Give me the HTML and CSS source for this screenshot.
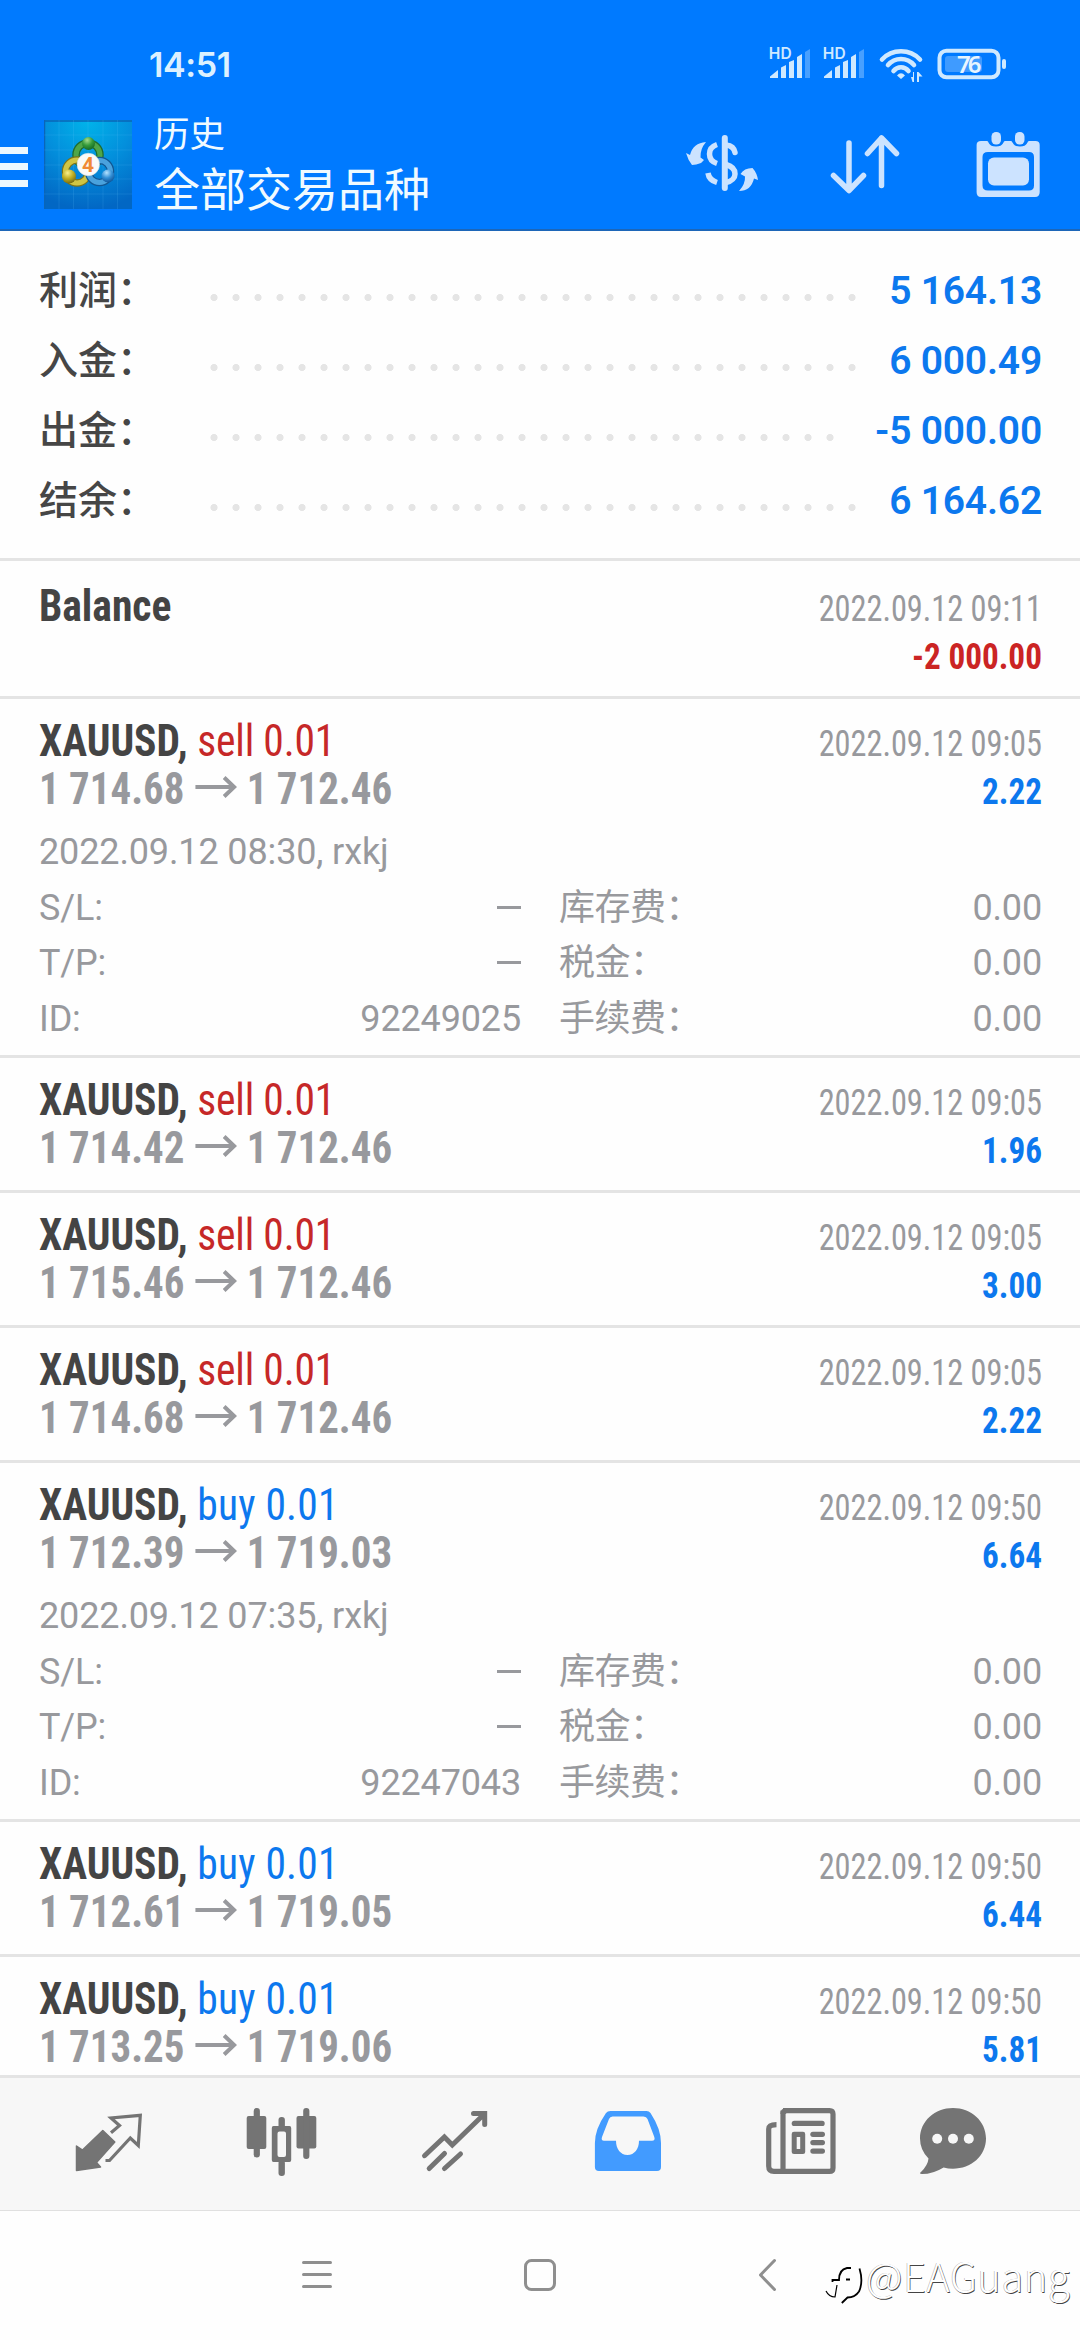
FILE: index.html
```html
<!DOCTYPE html>
<html lang="zh-CN">
<head>
<meta charset="utf-8">
<title>历史</title>
<link rel="stylesheet" href="styles.css">
</head>
<body>
<div class="screen">
  <header class="header">
    <div class="status">
      <span class="clock">14:51</span>
      <svg class="status-icons" width="240" height="40" viewBox="768 45 240 40" fill="#cfe9ff">
        <g id="signal">
          <text class="hd" x="768.8" y="59.2" textLength="23">HD</text>
          <path d="M770 78V76.500L778 70V78zM781 78V67.500L786 65V78zM789 78V62L794 60V78zM797 78V57L802 54V78z"/>
          <path d="M805 78V52L810 49V78z" opacity=".35"/>
        </g>
        <use href="#signal" x="54"/>
        <g fill="none" stroke="#cfe9ff" stroke-width="4.600" stroke-linecap="round">
          <path d="M882 59.500C892 48.500 910 48.500 920 59.500"/>
          <path d="M888 65C895 57 907 57 914 65"/>
          <path d="M893.500 71C897.500 66 904.500 66 908.500 71"/>
        </g>
        <path d="M901 79L897 75.500Q901 71 905 75.500zM914 72V82H912.500L911 77H913V72zM917 82V72H918.500L922.500 76.500H919V82z"/>
        <rect x="939.500" y="50.700" width="59" height="26.600" rx="7" fill="none" stroke="#cfe9ff" stroke-width="4"/>
        <rect x="945" y="56" width="37" height="16" rx="3" opacity=".3"/>
        <rect x="1002" y="59" width="4" height="10" rx="2"/>
        <text class="battery" x="957" y="73" textLength="24.500">76</text>
      </svg>
    </div>
    <div class="appbar">
      <div class="menu"><i></i><i></i><i></i></div>
      <svg class="logo" width="88" height="89" viewBox="0 0 88 89">
        <defs>
          <radialGradient id="bg" cx=".5" cy="0" r="1"><stop offset="0" stop-color="#00b4ea"/><stop offset=".5" stop-color="#038fdc"/><stop offset="1" stop-color="#0267c4"/></radialGradient>
          <radialGradient id="gr" cx=".4" cy=".25" r=".8"><stop offset="0" stop-color="#a5dc8c"/><stop offset=".5" stop-color="#369b3b"/><stop offset="1" stop-color="#126323"/></radialGradient>
          <radialGradient id="ye" cx=".4" cy=".25" r=".8"><stop offset="0" stop-color="#f8f08a"/><stop offset=".5" stop-color="#bfae22"/><stop offset="1" stop-color="#6d6410"/></radialGradient>
          <radialGradient id="bl" cx=".4" cy=".25" r=".8"><stop offset="0" stop-color="#b4e2ff"/><stop offset=".5" stop-color="#3490d6"/><stop offset="1" stop-color="#0c4f94"/></radialGradient>
        </defs>
        <rect width="88" height="89" fill="url(#bg)"/>
        <path d="M0 1H88M.5 0V89" stroke="#0a65b8" stroke-width="1.500"/>
        <path d="M15 0V89M29.500 0V89M44 0V89M59 0V89M73.500 0V89M0 15H88M0 30H88M0 45H88M0 59H88M0 74H88" stroke="#6fd0ff" stroke-opacity=".14"/>
        <g fill="none" stroke-linecap="round">
          <circle cx="44" cy="35" r="12" stroke="#1f6b2c" stroke-width="7.500"/>
          <circle cx="44" cy="35" r="12" stroke="#4fa648" stroke-width="5"/>
          <circle cx="33" cy="51.500" r="11.500" stroke="#7c741a" stroke-width="7.500"/>
          <circle cx="33" cy="51.500" r="11.500" stroke="#cfc544" stroke-width="5"/>
          <circle cx="55.500" cy="51.500" r="11" stroke="#125792" stroke-width="7.500"/>
          <circle cx="55.500" cy="51.500" r="11" stroke="#4aa2dd" stroke-width="5"/>
        </g>
        <circle cx="44.500" cy="23.500" r="6.500" fill="url(#gr)"/>
        <circle cx="25" cy="56.500" r="7" fill="url(#ye)"/>
        <circle cx="64" cy="56" r="6.500" fill="url(#bl)"/>
        <circle cx="44.300" cy="44.500" r="11.200" fill="#fafaf8" stroke="#d5dfe2" stroke-width=".6"/>
        <text class="logo-digit" x="44" y="52" text-anchor="middle">4</text>
      </svg>
      <div class="titles">
        <div class="subtitle">历史</div>
        <div class="title">全部交易品种</div>
      </div>
      <svg class="actions" width="356" height="70" viewBox="684 130 356 70" fill="#cce3ff">
        <path d="M686 153L690 155Q693 143 706 142Q700 149 700.500 157.500L704 160L701 163Q696 165 692 165Q688 160 686 153zM740.500 174L745 176.500Q745.500 184 739 191Q751 191 754 178.500L758 180Q757 173 752.500 168Q744 168 740.500 174z"/>
        <g fill="none" stroke="#cce3ff" stroke-width="5.500">
          <path d="M717 144.500Q709.500 147 709.500 154T717 163.500M708 173Q709 180 717 182.500"/>
          <path d="M724.800 138V188" stroke-linecap="round" stroke-width="6"/>
          <path d="M726 145Q734 146 735 152.500" stroke-linecap="round"/>
          <path d="M726 164.500C738 168 738 180 726 182.500"/>
          <path d="M849 143V190M833.500 175.500L849 190.500L863.500 175.500M881.500 185.500V138M867.500 153.500L881.500 138L896.500 153.500" stroke-linecap="round" stroke-linejoin="round"/>
        </g>
        <path fill-rule="evenodd" d="M981 141H987C989 141 988 146.500 996 146.500S1003 141 1005 141H1011C1013 141 1012 146.500 1020 146.500S1027 141 1029 141H1035.500Q1039.700 141 1039.700 145V192Q1039.700 197 1035 197H981Q976.600 197 976.600 192V145Q976.600 141 981 141zM988 152Q982.500 152 982.500 157V185.500Q982.500 190.500 988 190.500H1029Q1034 190.500 1034 185.500V157Q1034 152 1029 152z"/>
        <rect x="991.500" y="132" width="9.500" height="12.500" rx="4.500"/><rect x="1015" y="132" width="9.500" height="12.500" rx="4.500"/>
        <rect x="988" y="157.500" width="41" height="28" rx="6"/>
      </svg>
    </div>
  </header>

  <main class="history">
    <section class="summary">
      <div class="sum-row"><span class="sum-label">利润：</span><i class="leader"></i><b>5 164.13</b></div>
      <div class="sum-row"><span class="sum-label">入金：</span><i class="leader"></i><b>6 000.49</b></div>
      <div class="sum-row"><span class="sum-label">出金：</span><i class="leader leader-short"></i><b>-5 000.00</b></div>
      <div class="sum-row"><span class="sum-label">结余：</span><i class="leader"></i><b>6 164.62</b></div>
    </section>

    <article class="deal balance">
      <div class="line"><span class="symbol">Balance</span><time>2022.09.12 09:11</time></div>
      <div class="line"><span></span><span class="profit neg">-2 000.00</span></div>
    </article>

    <article class="deal">
      <div class="line"><span class="symbol">XAUUSD, <span class="sell">sell 0.01</span></span><time>2022.09.12 09:05</time></div>
      <div class="line"><span class="price">1 714.68<svg class="arrow" viewBox="0 0 42 22" preserveAspectRatio="none"><path d="M0 11H39M29 1.500L39 11L29 20.500"/></svg>1 712.46</span><span class="profit">2.22</span></div>
      <div class="opened">2022.09.12 08:30, rxkj</div>
      <dl class="details">
        <dt>S/L:</dt><dd><i class="dash"></i></dd><dt>库存费：</dt><dd>0.00</dd>
        <dt>T/P:</dt><dd><i class="dash"></i></dd><dt>税金：</dt><dd>0.00</dd>
        <dt>ID:</dt><dd>92249025</dd><dt>手续费：</dt><dd>0.00</dd>
      </dl>
    </article>

    <article class="deal">
      <div class="line"><span class="symbol">XAUUSD, <span class="sell">sell 0.01</span></span><time>2022.09.12 09:05</time></div>
      <div class="line"><span class="price">1 714.42<svg class="arrow" viewBox="0 0 42 22" preserveAspectRatio="none"><path d="M0 11H39M29 1.500L39 11L29 20.500"/></svg>1 712.46</span><span class="profit">1.96</span></div>
    </article>
    <article class="deal">
      <div class="line"><span class="symbol">XAUUSD, <span class="sell">sell 0.01</span></span><time>2022.09.12 09:05</time></div>
      <div class="line"><span class="price">1 715.46<svg class="arrow" viewBox="0 0 42 22" preserveAspectRatio="none"><path d="M0 11H39M29 1.500L39 11L29 20.500"/></svg>1 712.46</span><span class="profit">3.00</span></div>
    </article>
    <article class="deal">
      <div class="line"><span class="symbol">XAUUSD, <span class="sell">sell 0.01</span></span><time>2022.09.12 09:05</time></div>
      <div class="line"><span class="price">1 714.68<svg class="arrow" viewBox="0 0 42 22" preserveAspectRatio="none"><path d="M0 11H39M29 1.500L39 11L29 20.500"/></svg>1 712.46</span><span class="profit">2.22</span></div>
    </article>

    <article class="deal">
      <div class="line"><span class="symbol">XAUUSD, <span class="buy">buy 0.01</span></span><time>2022.09.12 09:50</time></div>
      <div class="line"><span class="price">1 712.39<svg class="arrow" viewBox="0 0 42 22" preserveAspectRatio="none"><path d="M0 11H39M29 1.500L39 11L29 20.500"/></svg>1 719.03</span><span class="profit">6.64</span></div>
      <div class="opened">2022.09.12 07:35, rxkj</div>
      <dl class="details">
        <dt>S/L:</dt><dd><i class="dash"></i></dd><dt>库存费：</dt><dd>0.00</dd>
        <dt>T/P:</dt><dd><i class="dash"></i></dd><dt>税金：</dt><dd>0.00</dd>
        <dt>ID:</dt><dd>92247043</dd><dt>手续费：</dt><dd>0.00</dd>
      </dl>
    </article>

    <article class="deal">
      <div class="line"><span class="symbol">XAUUSD, <span class="buy">buy 0.01</span></span><time>2022.09.12 09:50</time></div>
      <div class="line"><span class="price">1 712.61<svg class="arrow" viewBox="0 0 42 22" preserveAspectRatio="none"><path d="M0 11H39M29 1.500L39 11L29 20.500"/></svg>1 719.05</span><span class="profit">6.44</span></div>
    </article>
    <article class="deal">
      <div class="line"><span class="symbol">XAUUSD, <span class="buy">buy 0.01</span></span><time>2022.09.12 09:50</time></div>
      <div class="line"><span class="price">1 713.25<svg class="arrow" viewBox="0 0 42 22" preserveAspectRatio="none"><path d="M0 11H39M29 1.500L39 11L29 20.500"/></svg>1 719.06</span><span class="profit">5.81</span></div>
    </article>
  </main>

  <nav class="tabs">
    <svg viewBox="68.500 2104 80 80"><path fill="#747474" stroke="#747474" stroke-width="1.500" stroke-linejoin="round" d="M76 2146V2170.500L100 2167L96 2162.500L114.300 2142L102.300 2130.500L82 2150z"/><path fill="none" stroke="#747474" stroke-width="3.200" d="M110.500 2132.700L119 2125.500L110.500 2118L139.800 2115.300L137.800 2145.500L129.800 2138L109 2160.500H105"/></svg>
    <svg viewBox="241.500 2104 80 80" fill="#747474"><rect x="246.200" y="2116" width="19.600" height="33" rx="2"/><rect x="253.200" y="2108" width="6.200" height="49.500" rx="3"/><rect x="296" y="2116" width="19.800" height="32.500" rx="2"/><rect x="302.700" y="2108" width="6.200" height="51" rx="3"/><rect x="278" y="2117" width="6.400" height="12" rx="3"/><rect x="278" y="2160" width="6.400" height="16" rx="3"/><path fill-rule="evenodd" d="M273 2126H289Q290.700 2126 290.700 2128V2160Q290.700 2162 289 2162H273Q271.300 2162 271.300 2160V2128Q271.300 2126 273 2126zM279 2131.500Q277 2131.500 277 2133.500V2155Q277 2157 279 2157H283.500Q285.500 2157 285.500 2155V2133.500Q285.500 2131.500 283.500 2131.500z"/></svg>
    <svg viewBox="414.500 2104 80 80" fill="none" stroke="#747474" stroke-width="5" stroke-linecap="round"><path d="M424 2155.700L443.900 2137L451.800 2145L483.800 2114M473 2113.500H484.200V2124.500M428.700 2168.500L444 2153.500M444 2168.500L460 2154"/></svg>
    <svg viewBox="587.500 2104 80 80"><path fill="#429bff" fill-rule="evenodd" d="M610 2111H646Q648.500 2111 650 2113Q660.500 2129 660.500 2143V2167Q660.500 2171 656.500 2171H598.400Q594.400 2171 594.400 2167V2143Q594.400 2129 605.500 2113Q607 2111 610 2111zM612 2116.500Q609.500 2116.500 608.500 2119L601.500 2137Q600.300 2140.800 603.500 2140.800H615.500C615.500 2149 620 2155 627 2155S638.500 2149 638.500 2140.800H651.500Q655 2140.800 653.800 2137L647 2119Q646 2116.500 643 2116.500z"/></svg>
    <svg viewBox="761 2104 80 80" fill="#747474"><path fill="none" stroke="#747474" stroke-width="5.200" d="M783 2110.600H829.500Q833 2110.600 833 2114V2168Q833 2171.400 829.500 2171.400H774Q768.700 2171.400 768.700 2166V2129Q768.700 2124.600 776.500 2124.600M783 2110.600V2171"/><path fill="none" stroke="#747474" stroke-width="5.200" d="M786.500 2110.600Q783 2110.600 783 2114"/><rect x="791.700" y="2120.800" width="33" height="5.200" rx="2.600"/><path fill-rule="evenodd" d="M794 2131.700H803Q805.200 2131.700 805.200 2134V2152Q805.200 2154 803 2154H794Q791.700 2154 791.700 2152V2134Q791.700 2131.700 794 2131.700zM796.700 2137V2149H800.200V2137z"/><rect x="810.300" y="2131.700" width="14.700" height="5.200" rx="2.600"/><rect x="810.300" y="2140" width="14.700" height="5.200" rx="2.600"/><rect x="810.300" y="2148.500" width="14.700" height="5.200" rx="2.600"/></svg>
    <svg viewBox="913 2104 80 80"><path fill="#747474" d="M953 2108C971 2108 986 2121 986 2138.500S971 2168.700 953 2168.700Q948 2168.700 943.600 2167.400Q933 2174 922 2174Q918.500 2173.500 921 2172Q928 2165 928.500 2158.500Q920 2150 920 2138.500C920 2121 935 2108 953 2108z"/><g fill="#f7f7f7"><circle cx="937.200" cy="2138.800" r="5"/><circle cx="953" cy="2138.800" r="5"/><circle cx="968.800" cy="2138.800" r="5"/></g></svg>
  </nav>

  <footer class="sysnav">
    <svg width="480" height="40" viewBox="300 2255 480 40" fill="none" stroke="#8f8f8f" stroke-width="3" stroke-linecap="round" stroke-linejoin="round"><path d="M303.500 2262.500H330.500M303.500 2274.500H330.500M303.500 2286.500H330.500M774.500 2260.500L760.500 2275L774.500 2289.500"/><rect x="525.500" y="2260.500" width="29" height="29" rx="6"/></svg>
    <div class="watermark">
      <svg width="40" height="44" viewBox="825 2260 40 44" fill="none" stroke="#000" stroke-width="1.800"><path d="M851 2268H847Q839 2269.500 839 2280H832.500V2282M846 2279.500H850"/><path d="M859.500 2268.500Q863.500 2282 859 2291.500Q855 2297.500 847.500 2297.500L841.800 2303"/><path d="M826 2291Q829 2297 835 2297L837 2285" stroke-width="1.200"/></svg>
      <span>@EAGuang</span>
    </div>
  </footer>
</div>
</body>
</html>
```
FILE: styles.css
```css
* { box-sizing: border-box; }

body {
  margin: 0;
  background: #fefefe;
  font-family: Roboto, "Noto Sans CJK SC", sans-serif;
}

i { font-style: normal; }
svg { display: block; flex: none; }

.screen {
  display: flex;
  flex-direction: column;
  width: 1080px;
  height: 2340px;
  overflow: hidden;
}

/* Header */
.header {
  flex: none;
  height: 231px;
  background: #007aff;
  border-bottom: 2px solid #1d66b8;
}

.status {
  display: flex;
  justify-content: space-between;
  align-items: center;
  height: 96px;
  padding: 34px 72px 0 149px;
}

.clock {
  font: 600 34px/62px Inter, sans-serif;
  letter-spacing: -0.4px;
  color: #dcf1ff;
}

.hd { font: 600 15.500px Inter, sans-serif; }
.battery { font: 600 24px "Noto Sans", sans-serif; fill: #e8f5ff; }
.logo-digit { font: 700 21px Roboto, sans-serif; fill: #f08a35; }

.appbar { display: flex; align-items: flex-start; }

.menu {
  display: grid;
  gap: 9.500px;
  width: 28px;
  margin-top: 50.500px;
}
.menu i { height: 7px; background: #edf8ff; }

.logo { margin: 24px 0 0 16px; }

.titles {
  flex: 1;
  margin-left: 22px;
  color: #f0faff;
}
.subtitle { margin-top: 14px; font-size: 35.500px; line-height: 50px; }
.title { font-size: 46px; line-height: 61px; }

.actions { margin: 34px 40px 0 0; }

/* Totals */
.history { flex: none; height: 1844px; overflow: hidden; }

.summary {
  height: 327px;
  padding: 25px 38px 0 39px;
}
.sum-row {
  display: flex;
  height: 70px;
  font-size: 39px;
  line-height: 70px;
}
.sum-label { width: 163.500px; font-weight: 500; color: #464646; }
.leader {
  width: 660px;
  background: radial-gradient(circle at 11px 41.500px, #e5e5e5 3.200px, transparent 3.900px) 0 0 / 22px 70px repeat-x;
}
.leader-short { width: 638px; }
.sum-row b { margin-left: auto; font-weight: 650; letter-spacing: -0.2px; color: #0c78ee; }

/* Deals */
.deal {
  padding: 18px 38px 18px 39px;
  border-top: 3px solid #e4e4e4;
}
.balance { padding-top: 21px; }

.line {
  display: flex;
  justify-content: space-between;
  align-items: baseline;
  height: 48px;
  line-height: 48px;
  white-space: nowrap;
}
.symbol, .price, .line time, .profit {
  font-family: "Roboto Condensed", Roboto, sans-serif;
  font-stretch: 75%;
  transform-origin: 0 50%;
}
.symbol { font-size: 44px; font-weight: 700; color: #444; transform: scaleX(0.944); }
.sell, .buy { font-weight: 400; }
.sell { letter-spacing: -0.2px; color: #c62828; }
.buy { letter-spacing: 0.2px; color: #0c78ee; }
.price { font-size: 44px; font-weight: 700; color: #98999d; transform: scaleX(0.93); }
.line time, .profit { font-size: 36px; transform-origin: 100% 50%; }
.line time { color: #98999d; transform: scaleX(0.897); }
.profit { font-weight: 700; color: #0c78ee; transform: scaleX(0.922); }
.profit.neg { margin-top: 3px; color: #cb2424; }

.arrow {
  display: inline-block;
  width: 45px;
  height: 22px;
  margin: 0 10px 6px 12px;
  vertical-align: baseline;
  fill: none;
  stroke: #98999d;
  stroke-width: 4;
}

.opened {
  padding-top: 11px;
  font-size: 36px;
  line-height: 56px;
  letter-spacing: -0.13px;
  color: #98999d;
}
.details {
  display: grid;
  grid-template-columns: 160px 322px 198px 323px;
  grid-auto-rows: 55.500px;
  margin: 0.5px 0 -10px;
  font-size: 36px;
  line-height: 55.500px;
  letter-spacing: -0.15px;
  color: #98999d;
}
.details dt:nth-of-type(even) { padding-left: 38px; letter-spacing: -0.5px; white-space: nowrap; }
.details dd { margin: 0; text-align: right; }
.dash {
  display: inline-block;
  width: 24px;
  height: 3px;
  background: #98999d;
  vertical-align: 11px;
}

/* Bottom tabs */
.tabs {
  flex: none;
  display: grid;
  grid-template-columns: repeat(5, 173px) 132px;
  justify-items: center;
  align-items: center;
  height: 136px;
  padding: 0 21px 0 22px;
  background: #f7f7f7;
  border-top: 3px solid #e4e4e4;
  border-bottom: 1px solid #e0e0e0;
}
.tabs svg { width: 80px; height: 80px; }

.sysnav {
  flex: 1;
  display: flex;
  align-items: flex-start;
  padding: 44px 8px 0 300px;
}
.watermark {
  display: flex;
  margin: 5px 0 0 45px;
}
.watermark span {
  margin: -8px 0 0 1px;
  font: 300 40px/46px "Noto Sans CJK SC", sans-serif;
  letter-spacing: 0.5px;
  color: #fff;
  text-shadow: 0.8px 0.8px 0.5px #444, -0.5px -0.5px 0.5px #aaa;
}
```
